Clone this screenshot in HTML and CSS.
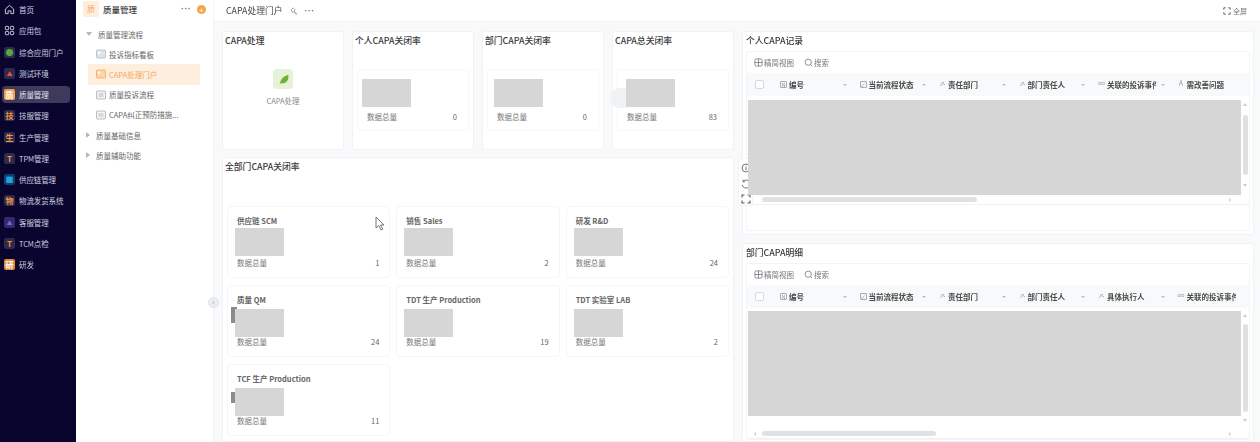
FILE: index.html
```html
<!DOCTYPE html>
<html lang="zh-CN">
<head>
<meta charset="utf-8">
<title>CAPA处理门户</title>
<link rel="stylesheet" href="styles.css">
</head>
<body>
<div class="app">
  <nav class="nav">
    <a class="nav-item"><svg class="nav-svg" viewBox="0 0 12 12"><path d="M1.5 5.5 6 1.5l4.5 4v5h-3V7.500h-3v3h-3z"/></svg><span>首页</span></a>
    <a class="nav-item"><svg class="nav-svg" viewBox="0 0 12 12"><rect x="1.500" y="1.500" width="3.600" height="3.600" rx=".8"/><rect x="7" y="1.500" width="3.600" height="3.600" rx=".8"/><rect x="1.500" y="7" width="3.600" height="3.600" rx=".8"/><rect x="7" y="7" width="3.600" height="3.600" rx=".8"/></svg><span>应用包</span></a>
    <a class="nav-item"><i class="tile tile-green">●</i><span>综合应用门户</span></a>
    <a class="nav-item"><i class="tile tile-red">▲</i><span>测试环境</span></a>
    <a class="nav-item nav-active"><i class="tile tile-solid">质</i><span>质量管理</span></a>
    <a class="nav-item"><i class="tile">技</i><span>技服管理</span></a>
    <a class="nav-item"><i class="tile">生</i><span>生产管理</span></a>
    <a class="nav-item"><i class="tile">T</i><span>TPM管理</span></a>
    <a class="nav-item"><i class="tile tile-blue">■</i><span>供应链管理</span></a>
    <a class="nav-item"><i class="tile">物</i><span>物流发货系统</span></a>
    <a class="nav-item"><i class="tile tile-purple">▲</i><span>客服管理</span></a>
    <a class="nav-item"><i class="tile">T</i><span>TCM点检</span></a>
    <a class="nav-item"><i class="tile tile-fill">研</i><span>研发</span></a>
  </nav>

  <aside class="side">
    <div class="side-head">
      <i class="side-logo">质</i>
      <strong class="side-title">质量管理</strong>
      <span class="dots">···</span>
      <i class="add">+</i>
    </div>
    <ul class="tree">
      <li class="tree-group"><b class="caret caret-down"></b>质量管理流程</li>
      <li class="tree-leaf"><svg class="leaf-ic" viewBox="0 0 10 10"><rect x=".5" y="1" width="9" height="8" rx="1" fill="#dfe4ea" stroke="#aab3bd" stroke-width=".7"/><rect x="2" y="2.600" width="2.400" height="2.200" fill="#fff"/></svg>投诉指标看板</li>
      <li class="tree-leaf tree-active"><svg class="leaf-ic" viewBox="0 0 10 10"><rect x=".5" y="1" width="9" height="8" rx="1" fill="#fbd5ac" stroke="#f5a253" stroke-width=".7"/><rect x="2" y="2.600" width="2.400" height="2.200" fill="#fff"/></svg>CAPA处理门户</li>
      <li class="tree-leaf"><svg class="leaf-ic" viewBox="0 0 10 10"><rect x=".5" y="1" width="9" height="8" rx="1" fill="#f2f4f6" stroke="#9aa4ae" stroke-width=".7"/><path d="M2.500 4h5M2.500 6h5" stroke="#9aa4ae" stroke-width=".7"/></svg>质量投诉流程</li>
      <li class="tree-leaf"><svg class="leaf-ic" viewBox="0 0 10 10"><rect x=".5" y="1" width="9" height="8" rx="1" fill="#f2f4f6" stroke="#9aa4ae" stroke-width=".7"/><path d="M2.500 4h5M2.500 6h5" stroke="#9aa4ae" stroke-width=".7"/></svg>CAPA纠正预防措施...</li>
      <li class="tree-group"><b class="caret"></b>质量基础信息</li>
      <li class="tree-group"><b class="caret"></b>质量辅助功能</li>
    </ul>
    <i class="collapse">‹</i>
  </aside>

  <main class="main">
    <header class="topbar">
      <span class="page-title">CAPA处理门户</span>
      <svg class="top-ic" viewBox="0 0 10 10"><path d="M1.500 3.500 4 1l2.500 2.500L5 5l3.500 3.500-.8.8L4.200 5.800 3 7z" fill="none" stroke="#777" stroke-width=".8"/></svg>
      <span class="dots">···</span>
      <span class="fullscreen"><svg class="full-ic" viewBox="0 0 10 10"><path d="M1 3.500V1h2.500M6.500 1H9v2.500M9 6.500V9H6.500M3.500 9H1V6.500" fill="none" stroke="#556" stroke-width="1.100"/></svg>全屏</span>
    </header>

    <div class="content">
      <section class="left">
        <div class="stats">
          <article class="card">
            <h2 class="card-title">CAPA处理</h2>
            <div class="entry">
              <span class="entry-ic"><svg viewBox="0 0 12 12"><path d="M2.500 10.500C3 6 5.500 3 10.500 1.500c.5 5-1.500 8-5.500 8-1 0-1.500-.2-2 .2z" fill="#6db52f"/></svg></span>
              <span class="entry-label">CAPA处理</span>
            </div>
          </article>
          <article class="card">
            <h2 class="card-title">个人CAPA关闭率</h2>
            <div class="stat"><div class="mask"></div><div class="metric"><span>数据总量</span><span>0</span></div></div>
          </article>
          <article class="card">
            <h2 class="card-title">部门CAPA关闭率</h2>
            <div class="stat"><div class="mask mask-b"></div><div class="metric"><span>数据总量</span><span>0</span></div></div>
          </article>
          <article class="card">
            <h2 class="card-title">CAPA总关闭率</h2>
            <div class="stat"><i class="ghost"></i><div class="mask mask-c"></div><div class="metric"><span>数据总量</span><span>83</span></div></div>
          </article>
        </div>

        <article class="card card-depts">
          <h2 class="card-title">全部门CAPA关闭率</h2>
          <div class="depts">
            <div class="dept"><h3 class="dept-name">供应链 SCM</h3><div class="mask"></div><div class="metric"><span>数据总量</span><span>1</span></div>
              <svg class="cursor" viewBox="0 0 10 15"><path d="M1 1v11l2.800-2.500L6 14l1.800-.8L5.600 9H9z" fill="#fff" stroke="#666" stroke-width=".9"/></svg></div>
            <div class="dept"><h3 class="dept-name">销售 Sales</h3><div class="mask"></div><div class="metric"><span>数据总量</span><span>2</span></div></div>
            <div class="dept"><h3 class="dept-name">研发 R&amp;D</h3><div class="mask"></div><div class="metric"><span>数据总量</span><span>24</span></div></div>
            <div class="dept dept-low"><h3 class="dept-name">质量 QM</h3><i class="flag"></i><div class="mask"></div><div class="metric"><span>数据总量</span><span>24</span></div></div>
            <div class="dept dept-low"><h3 class="dept-name">TDT 生产 Production</h3><div class="mask"></div><div class="metric"><span>数据总量</span><span>19</span></div></div>
            <div class="dept dept-low"><h3 class="dept-name">TDT 实验室 LAB</h3><div class="mask"></div><div class="metric"><span>数据总量</span><span>2</span></div></div>
            <div class="dept dept-low"><h3 class="dept-name">TCF 生产 Production</h3><i class="flag flag-low"></i><div class="mask"></div><div class="metric"><span>数据总量</span><span>11</span></div></div>
          </div>
        </article>
      </section>

      <section class="right">
        <div class="float-tools">
          <svg viewBox="0 0 10 10"><circle cx="5" cy="5" r="4" fill="none" stroke="#555" stroke-width=".8"/><path d="M5 4.200v3M5 2.600v.8" stroke="#555" stroke-width=".9"/></svg>
          <svg viewBox="0 0 10 10"><path d="M2 2.500A4 4 0 1 1 1.200 6M2 .8v2h2" fill="none" stroke="#555" stroke-width=".8"/></svg>
          <svg viewBox="0 0 10 10"><path d="M1 3.500V1h2.500M6.500 1H9v2.500M9 6.500V9H6.500M3.500 9H1V6.500" fill="none" stroke="#555" stroke-width="1.100"/></svg>
        </div>

        <article class="card panel panel-a">
          <h2 class="card-title">个人CAPA记录</h2>
          <div class="table">
            <div class="tools">
              <span class="tool"><svg viewBox="0 0 10 10"><rect x="1" y="1" width="8" height="8" rx="1.500" fill="none" stroke="#667" stroke-width=".8"/><path d="M1 5h8M5 1v8" stroke="#667" stroke-width=".8"/></svg>精简视图</span>
              <span class="tool"><svg viewBox="0 0 10 10"><circle cx="4.700" cy="4.700" r="3.500" fill="none" stroke="#667" stroke-width=".8"/><path d="m7.300 7.300 1.700 1.700" stroke="#667" stroke-width=".8"/></svg>搜索</span>
            </div>
            <div class="thead">
              <span class="cell cell-check"><i class="check"></i></span>
              <span class="cell"><i class="col-ic">N</i>编号<b class="sort"></b></span>
              <span class="cell"><i class="col-ic">✓</i>当前流程状态<b class="sort"></b></span>
              <span class="cell"><i class="col-ic col-plain">ዶ</i>责任部门<b class="sort"></b></span>
              <span class="cell"><i class="col-ic col-plain">ዶ</i>部门责任人<b class="sort"></b></span>
              <span class="cell"><i class="col-ic col-plain">∞</i><em class="clip">关联的投诉事件</em><b class="sort"></b></span>
              <span class="cell"><i class="col-ic col-plain">A</i>需改善问题</span>
            </div>
            <div class="tbody">
              <div class="tmask"></div>
              <div class="vbar"><b class="arrow-up"></b><i class="vthumb"></i><b class="arrow-down"></b></div>
            </div>
            <div class="hbar"><i class="hthumb"></i><b class="arrow-right"></b></div>
          </div>
        </article>

        <article class="card panel panel-b">
          <h2 class="card-title">部门CAPA明细</h2>
          <div class="table">
            <div class="tools">
              <span class="tool"><svg viewBox="0 0 10 10"><rect x="1" y="1" width="8" height="8" rx="1.500" fill="none" stroke="#667" stroke-width=".8"/><path d="M1 5h8M5 1v8" stroke="#667" stroke-width=".8"/></svg>精简视图</span>
              <span class="tool"><svg viewBox="0 0 10 10"><circle cx="4.700" cy="4.700" r="3.500" fill="none" stroke="#667" stroke-width=".8"/><path d="m7.300 7.300 1.700 1.700" stroke="#667" stroke-width=".8"/></svg>搜索</span>
            </div>
            <div class="thead">
              <span class="cell cell-check"><i class="check"></i></span>
              <span class="cell"><i class="col-ic">N</i>编号<b class="sort"></b></span>
              <span class="cell"><i class="col-ic">✓</i>当前流程状态<b class="sort"></b></span>
              <span class="cell"><i class="col-ic col-plain">ዶ</i>责任部门<b class="sort"></b></span>
              <span class="cell"><i class="col-ic col-plain">ዶ</i>部门责任人<b class="sort"></b></span>
              <span class="cell"><i class="col-ic col-plain">ዶ</i>具体执行人<b class="sort"></b></span>
              <span class="cell"><i class="col-ic col-plain">∞</i><em class="clip">关联的投诉事件</em></span>
            </div>
            <div class="tbody">
              <div class="tmask"></div>
              <div class="vbar"><b class="arrow-up"></b><i class="vthumb"></i><b class="arrow-down"></b></div>
            </div>
            <div class="hbar"><b class="arrow-left"></b><i class="hthumb"></i><b class="arrow-right"></b></div>
          </div>
        </article>
      </section>
    </div>
  </main>
</div>
</body>
</html>
```

FILE: styles.css
```css
* { box-sizing: border-box; }
html, body { margin: 0; height: 100%; overflow: hidden; background: #fff; }
body { font-family: "Noto Sans CJK SC", "Noto Sans", sans-serif; font-size: 7.5px; color: #555; }
i, em { font-style: normal; }
h2, h3, ul { margin: 0; padding: 0; list-style: none; }

.app { display: flex; width: 1260px; height: 442px; overflow: hidden; filter: blur(.4px); }

/* Dark app rail */
.nav { flex: 0 0 76px; background: #09052e; display: flex; flex-direction: column; gap: 4.25px; padding: 1px 6px 0 2px; }
.nav-item { height: 17px; display: flex; align-items: center; gap: 4px; padding-left: 2px; border-radius: 4px; color: #cfcfe0; white-space: nowrap; letter-spacing: -.1px; }
.nav-active { background: #3d3a5c; color: #e4e4ee; }
.nav-svg { width: 11px; height: 11px; fill: none; stroke: #d7d7e4; stroke-width: 1; flex: none; }
.tile { width: 11px; height: 11px; flex: none; border-radius: 2px; background: #2c2a4d; color: #ee9443; font-size: 8px; line-height: 11px; text-align: center; font-weight: 700; overflow: hidden; }
.tile-solid { background: #f4a04e; color: #fff; }
.tile-fill { background: #e2893b; color: #fff; }
.tile-green { color: #5aa83a; }
.tile-red { color: #e2503e; font-size: 6px; }
.tile-blue { background: #123c66; color: #20a3dd; }
.tile-purple { background: #33296b; color: #7c62d8; font-size: 6px; }

/* Module sidebar */
.side { flex: 0 0 138px; position: relative; background: #fff; border-right: 1px solid #f1f3f5; }
.side-head { height: 18px; display: flex; align-items: center; padding: 0 7px; }
.side-logo { width: 16px; height: 16px; flex: none; border-radius: 2px; background: #fdeede; color: #f3a35d; font-size: 8px; line-height: 16px; text-align: center; }
.side-title { margin-left: 4px; font-size: 8.5px; font-weight: 500; color: #444; }
.dots { font-family: "Liberation Sans", sans-serif; color: #777; font-size: 9px; font-weight: 700; letter-spacing: .3px; }
.side .dots { margin-left: auto; }
.add { width: 9px; height: 9px; margin-left: 6px; border-radius: 50%; background: #f6a44c; color: #fff; font-size: 8px; line-height: 9px; text-align: center; }
.tree { padding-top: 6px; }
.tree-group, .tree-leaf { height: 20.2px; display: flex; align-items: center; color: #666; white-space: nowrap; }
.tree-group { padding-left: 10px; }
.tree-leaf { margin: 0 13px 0 12px; padding-left: 8px; gap: 3px; }
.tree-active { background: #fdeedd; color: #f4a45c; }
.leaf-ic { width: 10px; height: 10px; flex: none; }
.caret { width: 0; height: 0; margin-right: 6px; border-style: solid; border-width: 3px 0 3px 4px; border-color: transparent transparent transparent #b4b8be; }
.caret-down { border-width: 4px 3px 0 3px; border-color: #b4b8be transparent transparent transparent; }
.collapse { position: absolute; right: -6px; top: 297px; width: 11px; height: 11px; border-radius: 50%; background: #eceef1; border: 1px solid #dfe2e6; color: #999; font-size: 8px; line-height: 8px; text-align: center; z-index: 3; }

/* Main area */
.main { flex: 1; min-width: 0; display: flex; flex-direction: column; background: #f7f9fb; }
.topbar { flex: 0 0 22px; display: flex; align-items: center; gap: 7px; padding: 0 13px 0 12px; background: #fff; border-bottom: 1px solid #f1f3f5; }
.page-title { font-size: 8.8px; color: #444; }
.top-ic { width: 8px; height: 8px; }
.fullscreen { margin-left: auto; display: flex; align-items: center; gap: 2px; font-size: 7px; color: #777; }
.full-ic { width: 8px; height: 8px; }

.content { flex: 1; min-height: 0; display: grid; grid-template-columns: 512px 512px; gap: 8px; padding: 9px 6px 0 8px; overflow: hidden; }
.left, .right { display: flex; flex-direction: column; min-height: 0; }
.left { gap: 7px; }
.right { gap: 8px; position: relative; }
.stats { display: grid; grid-template-columns: repeat(4, 122px); gap: 8px; height: 119px; }

.card { background: #fff; border: 1px solid #f0f2f4; border-radius: 3px; position: relative; }
.card-title { font-size: 8.8px; font-weight: 500; line-height: 12px; color: #3a3a3a; padding: 3px 2px 0; white-space: nowrap; }

.entry { display: flex; flex-direction: column; align-items: center; margin-top: 22px; }
.entry-ic { width: 20px; height: 20px; border-radius: 4px; background: #e6f1d9; display: flex; align-items: center; justify-content: center; }
.entry-ic svg { width: 13px; height: 13px; }
.entry-label { margin-top: 6px; color: #888; }

.stat { margin: 22px 4px 0; height: 62px; padding: 9px 11px 0 4px; background: #fff; border: 1px solid #f6f7f8; border-radius: 3px; position: relative; }
.mask { width: 49px; height: 28px; background: #d6d6d6; position: relative; z-index: 1; }
.mask-b { margin-left: 2px; }
.mask-c { margin-left: 4px; }
.metric { display: flex; justify-content: space-between; align-items: center; padding-left: 5px; margin-top: 5px; line-height: 10px; color: #777; }
.metric span:last-child { color: #666; }
.ghost { position: absolute; left: -8px; top: 18px; width: 18px; height: 20px; border-radius: 50% 0 0 50%; background: #f1f2f3; }

.card-depts { flex: 1; min-height: 0; }
.depts { display: grid; grid-template-columns: repeat(3, 1fr); grid-auto-rows: 72px; gap: 7px 6px; padding: 33px 4px 0; }
.dept { background: #fff; border: 1px solid #f5f6f7; border-radius: 4px; padding: 8px 10px 0 7px; position: relative; }
.dept-name { font-size: 7.5px; line-height: 11px; font-weight: 700; color: #666; padding-left: 2px; white-space: nowrap; }
.dept .mask { margin-top: 2px; }
.dept .metric { padding-left: 2px; margin-top: 2px; }
.dept-low .mask { margin-top: 4px; }
.dept-low .metric { margin-top: 0; }
.flag { position: absolute; left: 3px; top: 21px; width: 6px; height: 16px; background: #8b8b8b; }
.flag-low { top: 27px; height: 11px; }
.cursor { position: absolute; left: 147px; top: 9px; width: 10px; height: 15px; }

/* Right panels */
.float-tools { position: absolute; left: -4px; top: 127px; width: 15px; height: 48px; display: flex; flex-direction: column; align-items: center; justify-content: space-between; padding: 4px 0 1px; background: #fff; border: 1px solid #f0f2f4; border-radius: 3px; z-index: 1; }
.float-tools svg { width: 10px; height: 10px; }
.panel { padding: 0 3px; overflow: hidden; }
.panel-a { flex: 0 0 204px; }
.panel-b { flex: 1; min-height: 0; }
.panel .card-title { padding: 3px 0 0; height: 19px; }
.table { border: 1px solid #f3f4f6; border-radius: 2px; }
.panel-a .table { height: 180px; }
.tools { height: 21px; display: flex; align-items: center; gap: 10px; padding-left: 7px; color: #777; }
.tool { display: flex; align-items: center; gap: 1px; }
.tool svg { width: 9px; height: 9px; }
.thead { height: 23px; display: grid; grid-template-columns: 26px repeat(6, 79.5px); background: #f8f9fa; font-weight: 700; color: #4a4a4a; overflow: hidden; }
.cell { display: flex; align-items: center; padding-left: 7px; gap: 2px; white-space: nowrap; position: relative; border-right: 1px solid #fbfbfc; }
.cell-check { justify-content: center; padding-left: 0; }
.check { width: 9px; height: 9px; border: 1px solid #d5d8dc; border-radius: 2px; background: #fff; }
.col-ic { width: 7px; height: 7px; flex: none; border: 1px solid #aab; border-radius: 1px; font-size: 5px; line-height: 5px; text-align: center; color: #889; font-weight: 400; }
.col-plain { border: 0; font-size: 7px; color: #99a; }
.clip { display: block; max-width: 49px; overflow: hidden; }
.sort { position: absolute; right: 5px; top: 11px; width: 0; height: 0; border-style: solid; border-width: 2.5px 2px 0; border-color: #b7bbc0 transparent transparent; }

.tbody { display: flex; padding: 4px 0 0 1px; }
.panel-a .tbody { height: 100px; }
.panel-b .tbody { height: 122px; padding-top: 3px; }
.tmask { width: 493px; background: #d6d6d6; position: relative; z-index: 2; }
.panel-a .tmask { height: 95px; }
.panel-b .tmask { height: 105px; }
.vbar { width: 8px; display: flex; flex-direction: column; align-items: center; gap: 4px; }
.vthumb { width: 5px; flex: 1; background: #dfe0e2; border-radius: 3px; }
.arrow-up, .arrow-down { width: 0; height: 0; border-style: solid; flex: none; margin: 3px 0; }
.arrow-up { border-width: 0 2.5px 3px; border-color: transparent transparent #ccc; }
.arrow-down { border-width: 3px 2.5px 0; border-color: #ccc transparent transparent; }
.panel-a .vbar { height: 90px; gap: 6px; }
.panel-b .vbar { height: 114px; }

.hbar { height: 9px; display: flex; align-items: center; padding: 0 18px 1px 15px; position: relative; border-bottom: 1px solid #f0f1f3; }
.hthumb { height: 5px; background: #e0e1e3; border-radius: 3px; }
.panel-a .hthumb { width: 215px; }
.panel-b .hthumb { width: 174px; }
.arrow-right { margin-left: auto; width: 0; height: 0; border-style: solid; border-width: 2.5px 0 2.5px 2.5px; border-color: transparent transparent transparent #ccc; }
.arrow-left { position: absolute; left: 7px; top: 1.5px; width: 0; height: 0; border-style: solid; border-width: 2.5px 2.5px 2.5px 0; border-color: transparent #ccc transparent transparent; }
```
